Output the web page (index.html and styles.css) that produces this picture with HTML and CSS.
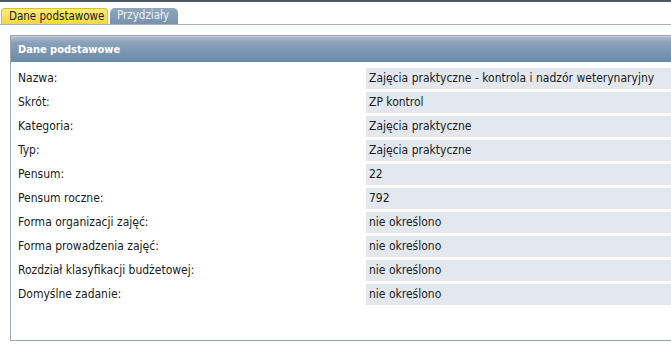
FILE: index.html
```html
<!DOCTYPE html>
<html lang="pl">
<head>
<meta charset="utf-8">
<title>Dane podstawowe</title>
<link rel="stylesheet" href="styles.css">
</head>
<body>
<div class="topline"></div>
<div class="tabbar">
  <div class="tab tab-active">Dane podstawowe</div>
  <div class="tab tab-inactive">Przydziały</div>
</div>
<div class="panel">
  <div class="panel-head">Dane podstawowe</div>
  <div class="rows">
    <div class="label">Nazwa:</div><div class="value">Zajęcia praktyczne - kontrola i nadzór weterynaryjny</div>
    <div class="label">Skrót:</div><div class="value">ZP kontrol</div>
    <div class="label">Kategoria:</div><div class="value">Zajęcia praktyczne</div>
    <div class="label">Typ:</div><div class="value">Zajęcia praktyczne</div>
    <div class="label">Pensum:</div><div class="value">22</div>
    <div class="label">Pensum roczne:</div><div class="value">792</div>
    <div class="label">Forma organizacji zajęć:</div><div class="value">nie określono</div>
    <div class="label">Forma prowadzenia zajęć:</div><div class="value">nie określono</div>
    <div class="label">Rozdział klasyfikacji budżetowej:</div><div class="value">nie określono</div>
    <div class="label">Domyślne zadanie:</div><div class="value">nie określono</div>
  </div>
</div>
</body>
</html>
```
FILE: styles.css
```css
html, body {
  margin: 0;
  padding: 0;
  background: #ffffff;
  overflow: hidden;
}
body {
  width: 671px;
  height: 356px;
  font-family: "DejaVu Sans Condensed", "DejaVu Sans", sans-serif;
  font-size: 12px;
  color: #1a1a1a;
}
.topline {
  height: 2px;
  background: #4d5864;
}
.tabbar {
  display: flex;
  align-items: flex-end;
  gap: 2px;
  padding: 6px 0 0 1px;
  height: 16px;
  border-bottom: 1px solid #a9b1ba;
}
.tab {
  height: 16px;
  line-height: 15px;
  padding: 0 0 0 7px;
  border-radius: 4px 4px 0 0;
  box-sizing: border-box;
  white-space: nowrap;
  overflow: hidden;
  font-size: 11.5px;
}
.tab-active {
  background: linear-gradient(#faea7c, #f5d93c);
  border: 1px solid #d8c030;
  border-bottom: none;
  color: #222;
  width: 107px;
}
.tab-inactive {
  background: linear-gradient(#8fa8c0, #7792ae);
  color: #eef2f7;
  width: 68px;
  border-radius: 5px 5px 0 0;
}
.panel {
  margin: 10px -20px 0 10px;
  border: 1px solid #9ca6b0;
  height: 306px;
  box-sizing: border-box;
}
.panel-head {
  height: 26px;
  line-height: 26px;
  padding-left: 7px;
  color: #ffffff;
  font-weight: bold;
  font-size: 11px;
  background: linear-gradient(#aebdcc 0%, #8ba2bb 20%, #7a95b1 60%, #6f8aa7 100%);
  border-top: 1px solid #c4ceda;
  box-sizing: border-box;
}
.rows {
  display: grid;
  grid-template-columns: 355px 1fr;
  row-gap: 3px;
  padding-top: 6px;
}
.label, .value {
  height: 21px;
  line-height: 21px;
  white-space: nowrap;
}
.label {
  padding-left: 7px;
}
.value {
  background: #e3e8ef;
  padding-left: 3px;
}
```
